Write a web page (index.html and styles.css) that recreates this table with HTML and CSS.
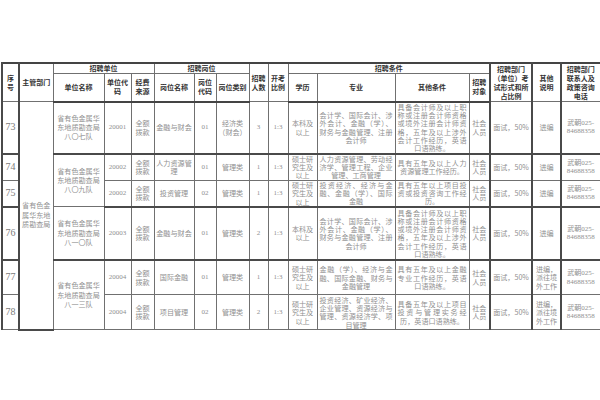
FILE: index.html
```html
<!DOCTYPE html>
<html lang="zh">
<head>
<meta charset="utf-8">
<title>招聘岗位表</title>
<link rel="stylesheet" href="styles.css">
</head>
<body>
<div class="page">
<table class="grid">
<colgroup>
<col class="c17"><col class="c34"><col class="c51"><col class="c27"><col class="c23"><col class="c40"><col class="c22"><col class="c33"><col class="c19"><col class="c20"><col class="c29"><col class="c78"><col class="c74"><col class="c21"><col class="c42"><col class="c29"><col class="c39">
</colgroup>
<thead>
<tr class="h1">
<th rowspan="2" class="vl">序<br>号</th>
<th rowspan="2" class="vl">主管部门</th>
<th colspan="3">招聘单位</th>
<th colspan="3">招聘岗位</th>
<th rowspan="2">招聘<br>人数</th>
<th rowspan="2">开考<br>比例</th>
<th colspan="4">招聘条件</th>
<th rowspan="2" class="vl vr">招聘部门<br>（单位）考<br>试形式和所<br>占比例</th>
<th rowspan="2" class="vr">其他<br>说明</th>
<th rowspan="2">招聘部门<br>联系人及<br>政策咨询<br>电话</th>
</tr>
<tr class="h2">
<th>单位名称</th>
<th>单位代<br>码</th>
<th>经费<br>来源</th>
<th>岗位名称</th>
<th>岗位<br>代码</th>
<th>岗位类别</th>
<th>学历</th>
<th>专业</th>
<th>其他条件</th>
<th>招聘<br>对象</th>
</tr>
</thead>
<tbody>
<tr class="r73 tb">
<td class="num vl">73</td>
<td rowspan="6" class="vl dept">省有色金属华东地质勘查局</td>
<td class="wide">省有色金属华东地质勘查局八〇七队</td>
<td class="code">20001</td>
<td>全额拨款</td>
<td>金融与财会</td>
<td class="code">01</td>
<td>经济类（财会）</td>
<td class="code">3</td>
<td class="code">1:3</td>
<td>本科及以上</td>
<td class="para">会计学、国际会计、涉外会计、金融（学）、财务与金融管理、注册会计师</td>
<td class="para">具备会计师及以上职称或注册会计师资格或境外注册会计师资格，五年及以上涉外会计工作经历，英语口语熟练。</td>
<td>社会人员</td>
<td class="vl vr">面试，50%</td>
<td class="vr">进编</td>
<td class="code">武朝025-<br>84688358</td>
</tr>
<tr class="r74">
<td class="num vl">74</td>
<td rowspan="2" class="wide">省有色金属华东地质勘查局八〇九队</td>
<td class="code">20002</td>
<td>全额拨款</td>
<td>人力资源管理</td>
<td class="code">01</td>
<td>管理类</td>
<td class="code">1</td>
<td class="code">1:3</td>
<td>硕士研究生及以上</td>
<td class="para">人力资源管理、劳动经济学、管理工程、企业管理、工商管理</td>
<td class="para">具有五年及以上人力资源管理工作经历。</td>
<td>社会人员</td>
<td class="vl vr">面试，50%</td>
<td class="vr">进编</td>
<td class="code">武朝025-<br>84688358</td>
</tr>
<tr class="r75 tb">
<td class="num vl">75</td>
<td class="code">20002</td>
<td>全额拨款</td>
<td>投资管理</td>
<td class="code">02</td>
<td>管理类</td>
<td class="code">1</td>
<td class="code">1:3</td>
<td>硕士研究生及以上</td>
<td class="para">投资经济、经济与金融、金融（学）、国际金融</td>
<td class="para">具有五年以上项目投资或投资咨询工作经历。</td>
<td>社会人员</td>
<td class="vl vr">面试，50%</td>
<td class="vr">进编</td>
<td class="code">武朝025-<br>84688358</td>
</tr>
<tr class="r76 tb">
<td class="num vl">76</td>
<td class="wide">省有色金属华东地质勘查局八一〇队</td>
<td class="code">20003</td>
<td>全额拨款</td>
<td>金融与财会</td>
<td class="code">01</td>
<td>管理类</td>
<td class="code">2</td>
<td class="code">1:3</td>
<td>本科及以上</td>
<td class="para">会计学、国际会计、涉外会计、金融（学）、财务与金融管理、注册会计师</td>
<td class="para">具备会计师及以上职称或注册会计师资格或境外注册会计师资格，五年及以上涉外会计工作经历，英语口语熟练。</td>
<td>社会人员</td>
<td class="vl vr">面试，50%</td>
<td class="vr">进编</td>
<td class="code">武朝025-<br>84688358</td>
</tr>
<tr class="r77">
<td class="num vl">77</td>
<td rowspan="2" class="wide">省有色金属华东地质勘查局八一三队</td>
<td class="code">20004</td>
<td>全额拨款</td>
<td>国际金融</td>
<td class="code">01</td>
<td>管理类</td>
<td class="code">1</td>
<td class="code">1:3</td>
<td>硕士研究生及以上</td>
<td class="para">金融（学）、经济与金融、国际金融、财务与金融管理</td>
<td class="para">具有五年及以上金融专业工作经历，英语口语熟练。</td>
<td>社会人员</td>
<td class="vl vr">面试，50%</td>
<td class="vr">进编，派往境外工作</td>
<td class="code">武朝025-<br>84688358</td>
</tr>
<tr class="r78">
<td class="num vl">78</td>
<td class="code">20004</td>
<td>全额拨款</td>
<td>项目管理</td>
<td class="code">02</td>
<td>管理类</td>
<td class="code">2</td>
<td class="code">1:3</td>
<td>硕士研究生及以上</td>
<td class="para">投资经济、矿业经济、企业管理、资源经济与管理、资源经济学、项目管理</td>
<td class="para">具备五年及以上项目投资与管理实务经历，英语口语熟练。</td>
<td>社会人员</td>
<td class="vl vr">面试，50%</td>
<td class="vr">进编，派往境外工作</td>
<td class="code">武朝025-<br>84688358</td>
</tr>
</tbody>
</table>
</div>
</body>
</html>
```
FILE: styles.css
```css
html, body {
  margin: 0;
  padding: 0;
  background: #ffffff;
}
.page {
  width: 600px;
  height: 400px;
  padding: 62px 0 0 1px;
  box-sizing: border-box;
  overflow: hidden;
}
.grid {
  table-layout: fixed;
  border-collapse: collapse;
  width: 598px;
  font-family: "Noto Sans CJK SC", "Liberation Serif", sans-serif;
  font-size: 7.1px;
  line-height: 8.4px;
  color: #909090;
  border-top: 2px solid #444;
  border-left: 2px solid #444;
}
.c17 { width: 17px; }
.c19 { width: 19px; }
.c20 { width: 20px; }
.c21 { width: 21px; }
.c22 { width: 22px; }
.c23 { width: 23px; }
.c27 { width: 27px; }
.c29 { width: 29px; }
.c33 { width: 33px; }
.c34 { width: 34px; }
.c39 { width: 39px; }
.c40 { width: 40px; }
.c42 { width: 42px; }
.c51 { width: 51px; }
.c74 { width: 74px; }
.c78 { width: 78px; }
th, td {
  border: 1px solid #707070;
  padding: 0 1px;
  text-align: center;
  vertical-align: middle;
  overflow: hidden;
  word-break: break-all;
}
th {
  color: #333333;
  font-weight: bold;
  font-size: 7px;
  line-height: 9px;
}
.h1 { height: 10px; }
.h2 { height: 28px; }
.h2 th { border-bottom: 2px solid #444; }
.r73 { height: 52px; }
.r74 { height: 26px; }
.r75 { height: 26px; }
.r76 { height: 53px; }
.r77 { height: 35px; }
.r78 { height: 35px; }
.tb td { border-bottom: 2px solid #4a4a4a; }
.vl { border-left: 2px solid #4a4a4a; }
.vr { border-right: 2px solid #4a4a4a; }
td.vl { border-left: 2px solid #4a4a4a; }
td.vr { border-right: 2px solid #4a4a4a; }
.num {
  font-family: "Liberation Serif", serif;
  font-size: 10px;
  color: #7a7a7a;
}
.code {
  font-family: "Liberation Serif", "Noto Sans CJK SC", serif;
  font-size: 7px;
}
.dept {
  padding: 0 1px;
  line-height: 9.6px;
}
.wide {
  padding: 0 3px;
  line-height: 9.2px;
}
.para {
  padding: 0 2px;
  text-align: justify;
  text-align-last: center;
  line-height: 8.3px;
}
```
